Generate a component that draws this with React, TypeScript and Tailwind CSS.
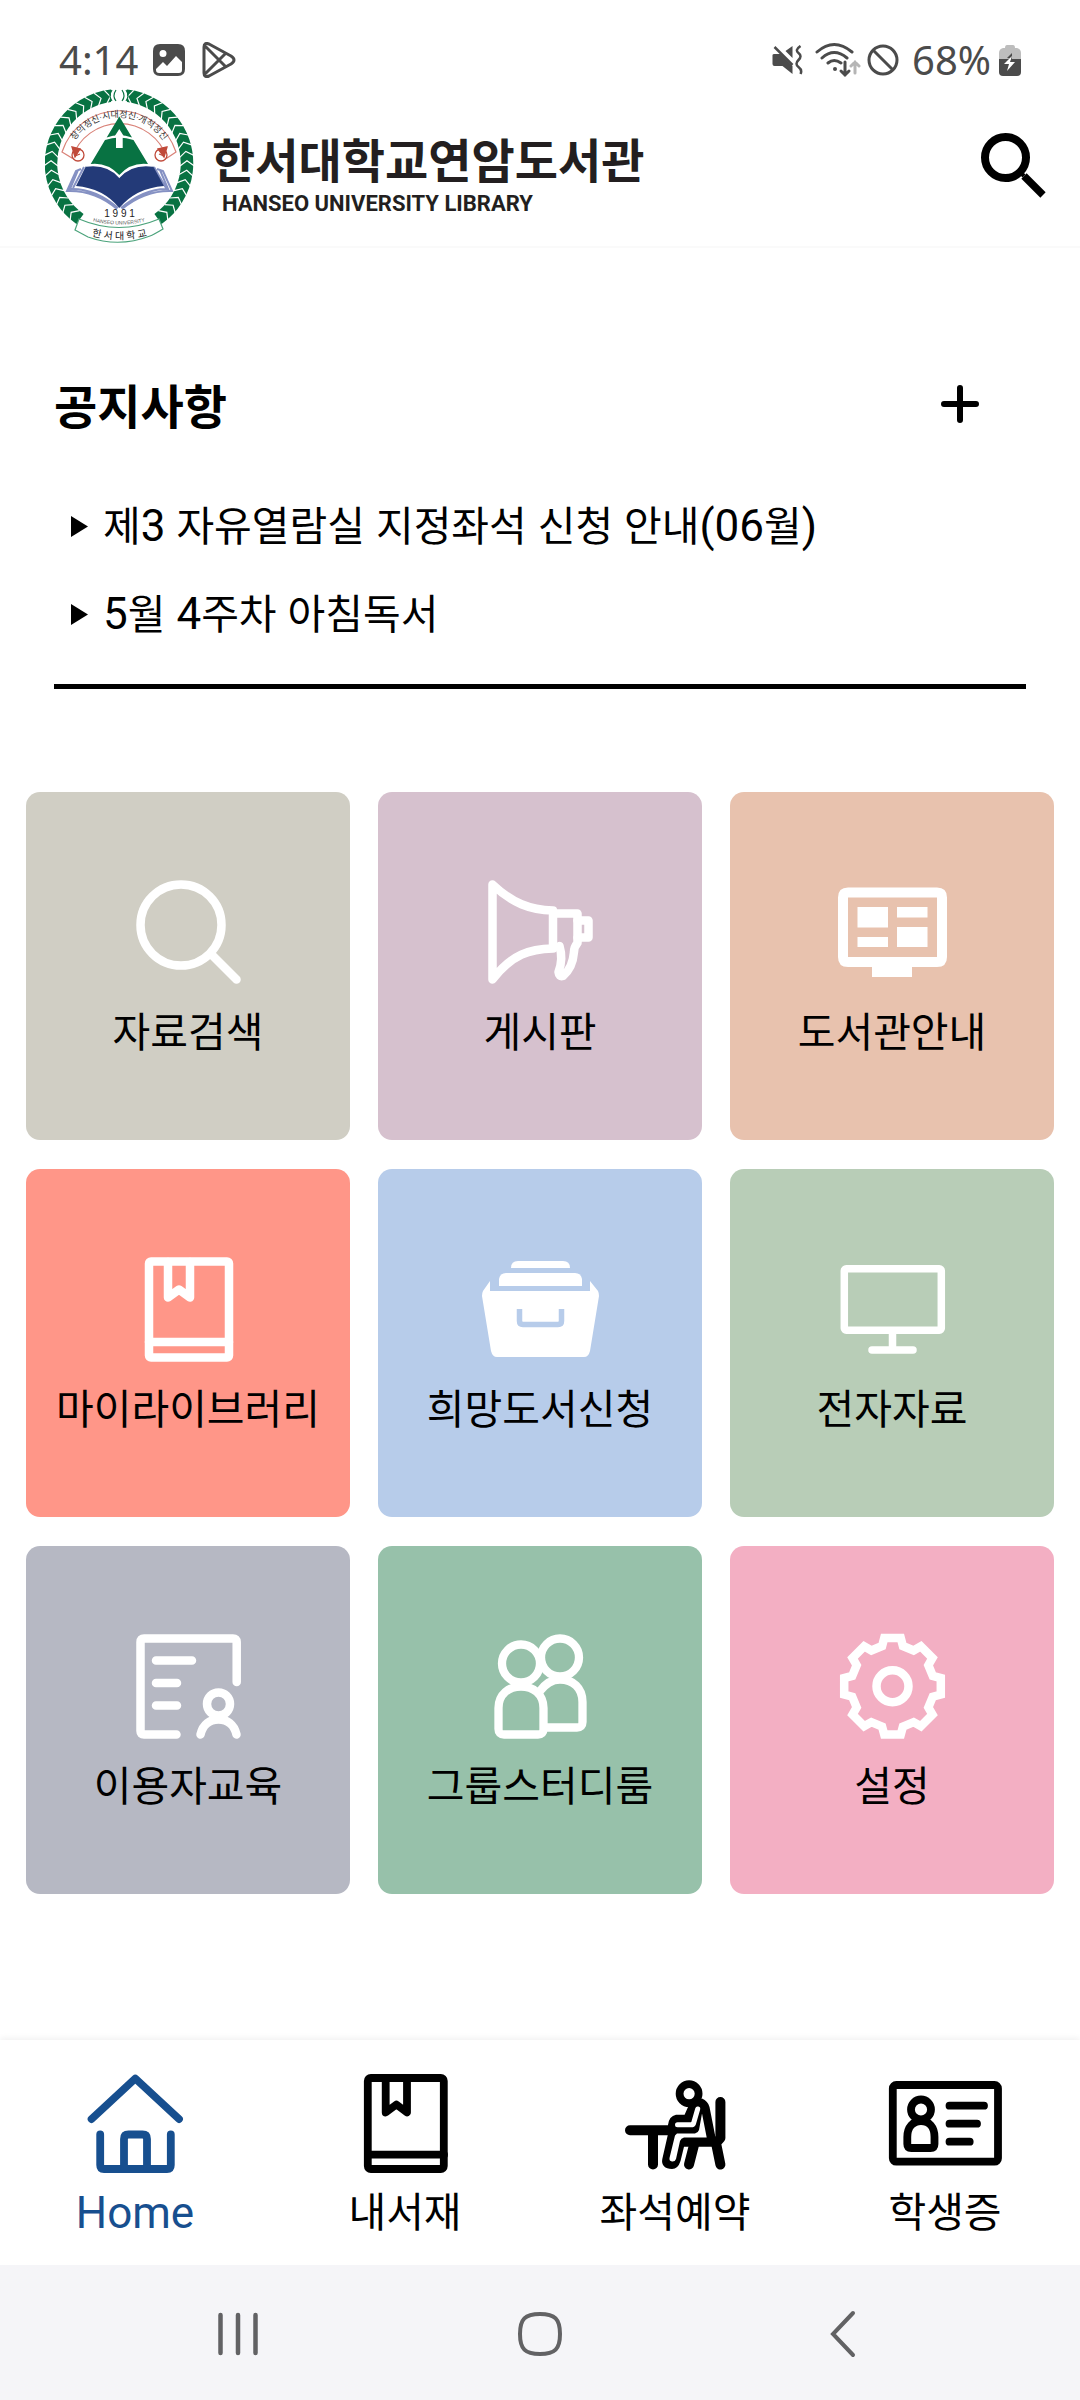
import type { ReactNode } from "react";

const korean = "font-['Roboto','Noto_Sans_CJK_KR',sans-serif]";

function TileIcon({ children }: { children: ReactNode }) {
  return (
    <svg
      aria-hidden="true"
      viewBox="0 0 120 120"
      className="size-[120px]"
      fill="none"
      stroke="currentColor"
      strokeWidth="8.5"
      strokeLinecap="round"
      strokeLinejoin="round"
    >
      {children}
    </svg>
  );
}

/* Latin letters and digits are set a little larger than the Hangul beside them. */
function MixedText({ text }: { text: string }) {
  return (
    <span>
      {text.split(/([\x20-\x7e]+)/).map((run, index) =>
        index % 2 === 1 ? (
          <span key={index} className="text-[44px]">
            {run}
          </span>
        ) : (
          run
        ),
      )}
    </span>
  );
}

function gearPath() {
  const points: string[] = [];
  for (let tooth = 0; tooth < 8; tooth++) {
    const corners: [number, number][] = [
      [-14.5, 41.6],
      [-9.7, 49],
      [9.7, 49],
      [14.5, 41.6],
    ];
    for (const [offset, radius] of corners) {
      const angle = ((tooth * 45 + offset) * Math.PI) / 180;
      points.push(`${(60.5 + radius * Math.sin(angle)).toFixed(2)} ${(60.3 - radius * Math.cos(angle)).toFixed(2)}`);
    }
  }
  return `M${points.join("L")}Z`;
}

const tiles: { label: string; color: string; icon: ReactNode }[] = [
  {
    label: "자료검색",
    color: "bg-[#d0cec4]",
    icon: (
      <>
        <circle cx="53" cy="53" r="40.5" />
        <path d="M83 82L108.5 107.5" />
      </>
    ),
  },
  {
    label: "게시판",
    color: "bg-[#d6c1ce]",
    icon: (
      <>
        <path d="M12.5 12.5V107.5C32 82 50 77 73 76.500V38.500C50 38 32 31 12.500 12.500Z" />
        <path d="M73 41.500H97.500V71Q94 75 94 80C93 92 89 99 83 104Q79 105 78.500 100C82 91 82.500 84 79.500 74" />
        <path d="M97.500 48.500H108.500V65.500H97.500" />
      </>
    ),
  },
  {
    label: "도서관안내",
    color: "bg-[#e8c2ae]",
    icon: (
      <g fill="currentColor" stroke="none">
        <path
          fillRule="evenodd"
          d="M16 15.500H105Q115 15.500 115 25.500V85Q115 95 105 95H80V105H40V95H16Q6 95 6 85V25.500Q6 15.500 16 15.500ZM16 25.500V85H105V25.500Z"
        />
        <path d="M25.500 35H56V55.500H25.500ZM25.500 65H56V75H25.500ZM65 35H95.500V45.500H65ZM65 55H95.500V75H65Z" />
      </g>
    ),
  },
  {
    label: "마이라이브러리",
    color: "bg-[#ff9688]",
    icon: (
      <>
        <rect x="21" y="12.500" width="80" height="96" rx="2" />
        <path d="M21 93H101M40 13V48.500L51 40.500L62 48.500V13" />
      </>
    ),
  },
  {
    label: "희망도서신청",
    color: "bg-[#b7ccea]",
    icon: (
      <g stroke="none" fill="currentColor">
        <path d="M31 19Q31 12 38 12H83Q90 12 90 19Z" />
        <path d="M19 37V30Q20 24 26 24H95Q101 24 102 30V37Z" />
        <path d="M10 32V42H110V32L118 42Q119 44 119 47L110 102Q108.500 108 104 108H17Q12.500 108 11 102L2 47Q2 44 3 42Z" />
        <path d="M39.500 60V72Q39.500 75.500 43 75.500H78Q81.500 75.500 81.500 72V60" fill="none" stroke="#b7ccea" strokeWidth="5.500" strokeLinecap="butt" />
      </g>
    ),
  },
  {
    label: "전자자료",
    color: "bg-[#b8cdb7]",
    icon: (
      <g strokeWidth="7.500">
        <rect x="12.300" y="19.800" width="97" height="61.500" rx="2" />
        <path d="M60.500 82V100M40 101H81" />
      </g>
    ),
  },
  {
    label: "이용자교육",
    color: "bg-[#b6b8c3]",
    icon: (
      <>
        <path d="M48.500 108.500H16Q12.500 108.500 12.500 105V16Q12.500 12.500 16 12.500H105Q108.700 12.500 108.700 16V56" />
        <path d="M28 34.500H64M28 57H49M28 79.500H49" />
        <circle cx="90.500" cy="78" r="11.500" />
        <path d="M72.500 108.500C75 98 82 93.500 90.500 93.500S106 98 108.500 108.500" />
      </>
    ),
  },
  {
    label: "그룹스터디룸",
    color: "bg-[#97c1aa]",
    icon: (
      <g strokeWidth="8.300">
        <circle cx="41" cy="37.500" r="19" />
        <circle cx="80" cy="31.500" r="19" />
        <path d="M18.500 103V82C18.500 68 29 60.500 41 60.500S63.500 68 63.500 82V103Q63.500 108.500 58 108.500H24Q18.500 108.500 18.500 103Z" />
        <path d="M60 65C66 57 72 53.500 80 53.500C93 53.500 102.500 62 102.500 76V96Q102.500 101.500 97 101.500H66" />
      </g>
    ),
  },
  {
    label: "설정",
    color: "bg-[#f3afc3]",
    icon: (
      <g strokeLinejoin="miter">
        <path d={gearPath()} />
        <circle cx="60.500" cy="60.300" r="16" />
      </g>
    ),
  },
];

const tabs: { label: string; style: string; icon: ReactNode }[] = [
  {
    label: "Home",
    style: "text-[#174f8f] text-[44px]",
    icon: (
      <g strokeWidth="7.800">
        <path d="M16.600 55L60.300 14.500L104 55" />
        <path d="M25.200 70.500V101Q25.200 105 29 105H92Q95.800 105 95.800 101V70.500" />
        <path d="M49 104V75Q49 70.500 53.500 70.500H67.500Q72 70.500 72 75V104" />
      </g>
    ),
  },
  {
    label: "내서재",
    style: "text-black text-[41px]",
    icon: (
      <g strokeWidth="7.800">
        <rect x="22.800" y="14" width="76" height="91" rx="3" />
        <path d="M23 90.700H99M40.700 14V48.500L51.400 40.500L62 48.500V14" />
      </g>
    ),
  },
  {
    label: "좌석예약",
    style: "text-black text-[41px]",
    icon: (
      <>
        <path d="M15 66.300H61M38 68V100.500M105.400 38V74L101 79L105.400 100.500M79 81L74 100.500" strokeWidth="10" />
        <path
          d="M73 43L87 34.500Q93 37 94.500 43L101 76V82.700H69L65.500 97Q63 105 57 105C50 105 46 101 47.300 95L53 70V61Q54 52 61 50.700H69.600Z"
          fill="currentColor"
          stroke="none"
        />
        <circle cx="74.100" cy="29.700" r="9.500" strokeWidth="7.800" fill="#fff" />
        <path d="M82.700 45L78.500 59.500Q78 60.800 76 60.800H62.500" stroke="#fff" strokeWidth="5" />
        <path
          d="M87 49.500L91.700 73.500H69Q66 74 65 77L61 95Q60 97.800 57 97.500Q54 97 54.500 94L60 71.500L62 69.500H80Q83 69 84 66Z"
          fill="#fff"
          stroke="none"
        />
      </>
    ),
  },
  {
    label: "학생증",
    style: "text-black text-[41px]",
    icon: (
      <g strokeWidth="7.800">
        <rect x="7.800" y="21" width="105.200" height="76.700" rx="3.500" />
        <circle cx="36" cy="45.500" r="10" />
        <path d="M22.300 80V73C22.300 63 28 57 36 57S49.500 63 49.500 73V80Q49.500 84 45.500 84H26.300Q22.300 84 22.300 80Z" />
        <path d="M64.500 41.700H99M64.500 59.700H92M64.500 77.700H84.700" />
      </g>
    ),
  },
];

function Emblem() {
  const angles: number[] = [];
  for (let a = 9; a <= 137; a += 8) angles.push(a, -a);
  return (
    <svg role="img" aria-label="한서대학교" viewBox="0 0 150 156" className="h-[156px] w-[150px]">
      <path d="M35 131A68 68 0 1 1 113 131" fill="none" stroke="#087242" strokeWidth="12.500" />
      <rect x="66" y="0" width="16" height="16" fill="#fff" />
      <g fill="none" stroke="#fff" strokeWidth="1.200">
        {angles.map((a) => (
          <path key={a} transform={`rotate(${a} 74 76)`} d={a > 0 ? "M77 1L72 8L77 15" : "M71 1L76 8L71 15"} />
        ))}
      </g>
      <path d="M67 2Q63 8 67 13M71 2Q67 8 71 13M77 2Q81 8 77 13M81 2Q85 8 81 13" fill="none" stroke="#087242" strokeWidth="1.200" />
      <path d="M17 64A60 60 0 0 1 131 64L122 70A50 50 0 0 0 27 70Z" fill="#fff" stroke="#d98278" strokeWidth="1.200" />
      <g fill="#fff" stroke="#c04a3a" strokeWidth="1.300">
        <circle cx="33" cy="67" r="6" />
        <circle cx="116" cy="67" r="6" />
        <path d="M27 59L35 61L30 69ZM122 59L113 61L119 69Z" fill="#c04a3a" />
        <path d="M30 68L35 66M114 66L119 68" />
      </g>
      <path id="motto" d="M24 63A54 54 0 0 1 124 63" fill="none" />
      <text fill="#333" fontSize="9" className={korean} textAnchor="middle">
        <textPath href="#motto" startOffset="50%">
          창의정신·시대정신·개척정신
        </textPath>
      </text>
      <path d="M74.300 28.500L87 49.500Q74 45 61.700 49.500Z" fill="#087242" />
      <path d="M60 52Q74 47 88.500 52L103 76Q86 74 74.300 87Q62 74 45.700 76Z" fill="#087242" />
      <path d="M74.300 41L79 48.500H77.700V60H71V48.500H69.500Z" fill="#fff" />
      <path d="M36 81L31 83L22 103Q50 102 72 121M33 82L25 101Q50 100 73 120M112 81L118 83L127 103Q100 102 77 121M115 82L123 101Q100 100 76 120M39 79L28 100M109 79L121 100" fill="none" stroke="#8591c3" strokeWidth="2" />
      <path d="M41 78Q62 75 74.300 89Q87 75 108 78L119 98Q91 100 74.300 120Q58 100 31 98Z" fill="#233a78" />
      <path d="M41 78Q62 75 74.300 89Q87 75 108 78" fill="none" stroke="#fff" strokeWidth="1.500" />
      <text x="74.500" y="129" textAnchor="middle" fontSize="10" fill="#222" className="font-['Liberation_Sans',sans-serif]">
        1 9 9 1
      </text>
      <path id="english" d="M43 132Q74 141 105 132" fill="none" />
      <text fill="#555" fontSize="5" className="font-['Liberation_Sans',sans-serif]" textAnchor="middle">
        <textPath href="#english" startOffset="50%">
          HANSEO UNIVERSITY
        </textPath>
      </text>
      <path d="M34 131Q74 148 114 131L118 141Q108 147 105 148Q74 160 43 149L30 142Z" fill="#fff" stroke="#4ba37b" strokeWidth="1.200" />
      <path id="ribbon" d="M34 144Q74 159 115 144" fill="none" />
      <text fill="#222" fontSize="10" className={korean} textAnchor="middle">
        <textPath href="#ribbon" startOffset="50%">
          한 서 대 학 교
        </textPath>
      </text>
    </svg>
  );
}

function StatusBar() {
  return (
    <div className="flex h-20 items-end justify-between pr-[59px] pl-[59px] font-['Noto_Sans',sans-serif] text-[40px] leading-10 text-[#4b4b4b]">
      <div className="flex items-center">
        <span className="mr-[15px]">4:14</span>
        <svg aria-hidden="true" viewBox="0 0 32 32" className="mr-[17px] size-8">
          <path
            fill="currentColor"
            fillRule="evenodd"
            d="M7 0H25Q32 0 32 7V25Q32 32 25 32H7Q0 32 0 25V7Q0 0 7 0ZM3 26Q3 29 6 29H26Q29 29 29 26V18L23 12L14 22L10 18L3 25ZM10 6A3.500 3.500 0 1 0 10 13A3.500 3.500 0 1 0 10 6Z"
          />
        </svg>
        <svg aria-hidden="true" viewBox="0 0 34 36" className="h-9 w-[34px]" fill="none" stroke="currentColor" strokeWidth="3" strokeLinejoin="round">
          <path d="M2 5Q2 0 7 2L29 14Q35 18 29 22L7 34Q2 36 2 31ZM3 4L24 25M3 32L24 11" />
        </svg>
      </div>
      <div className="flex items-center">
        <svg aria-hidden="true" viewBox="0 0 30 30" className="mr-3 h-[30px] w-[31px]" fill="none" stroke="currentColor">
          <path d="M0 10Q0 9 2 9H8L20 21V29L10 21H2Q0 21 0 19ZM13 6L20 1V13Z" fill="currentColor" stroke="none" />
          <path d="M2 2L20 20" strokeWidth="2.500" />
          <path d="M28 1Q22 5 26 8T26 15T26 22T28 29" strokeWidth="2.500" />
        </svg>
        <svg aria-hidden="true" viewBox="0 0 46 36" className="mr-[6px] h-9 w-[46px]" fill="none" stroke="currentColor" strokeWidth="3" strokeLinecap="round">
          <path d="M2 10Q19 -5 37 10M7 16Q19 5 32 16M13 21Q19 16 26 21" />
          <circle cx="20" cy="27" r="2" fill="currentColor" stroke="none" />
          <path d="M30 20V33M26 29L30 33L34 29" />
          <path d="M40 31V20M36 24L40 20L44 24" stroke="#b5b5b5" />
        </svg>
        <svg aria-hidden="true" viewBox="0 0 32 32" className="mr-[13px] size-8" fill="none" stroke="currentColor" strokeWidth="3">
          <circle cx="16" cy="16" r="14" />
          <path d="M6 6L26 26" />
        </svg>
        <span className="mr-2">68%</span>
        <svg aria-hidden="true" viewBox="0 0 22 32" className="h-8 w-[22px]">
          <path d="M6 4Q6 1 8 1H14Q16 1 16 4H18Q22 5 22 9V16H0V9Q0 5 4 4Z" fill="#bdbdbd" />
          <path d="M0 15H22V28Q22 32 18 32H4Q0 32 0 28Z" fill="currentColor" />
          <path d="M8 14L13 9V15Z" fill="currentColor" />
          <path d="M13 12L5 20H10L8 27L16 18H11Z" fill="#fff" />
        </svg>
      </div>
    </div>
  );
}

export default function App() {
  return (
    <div className={`flex min-h-screen flex-col bg-white text-black ${korean}`}>
      <StatusBar />
      <header className="flex items-start justify-between border-b-2 border-[#fafafa] pt-2 pr-[34px] pb-[2px] pl-[45px]">
        <a href="#home" className="flex items-start">
          <Emblem />
          <span className="mt-11 ml-[17px] flex flex-col text-[#231f20]">
            <span className="text-[47px] leading-[60px] font-bold">한서대학교연암도서관</span>
            <span className="ml-[10px] text-[22px] leading-6 font-bold">HANSEO UNIVERSITY LIBRARY</span>
          </span>
        </a>
        <button type="button" aria-label="검색" className="mt-11">
          <svg aria-hidden="true" viewBox="0 0 66 66" className="size-[66px]" fill="none" stroke="currentColor">
            <circle cx="25.500" cy="25.500" r="20.500" strokeWidth="8" />
            <path d="M40 40L44 44" strokeWidth="4" />
            <path d="M44 44L63 63" strokeWidth="7.500" />
          </svg>
        </button>
      </header>

      <main className="flex-1">
        <section aria-labelledby="notice-title" className="mx-[54px] border-b-5 border-black pt-[130px] pb-[26px]">
          <div className="flex items-center justify-between pr-[47px]">
            <h2 id="notice-title" className="text-[47px] leading-[60px] font-bold">
              공지사항
            </h2>
            <button type="button" aria-label="공지사항 더보기">
              <svg aria-hidden="true" viewBox="0 0 38 38" className="mb-2 size-[38px]" stroke="currentColor" strokeWidth="6" strokeLinecap="round">
                <path d="M19 3V35M3 19H35" />
              </svg>
            </button>
          </div>
          <ul className="mt-11">
            {["제3 자유열람실 지정좌석 신청 안내(06월)", "5월 4주차 아침독서"].map((notice) => (
              <li key={notice}>
                <a href="#notice" className="flex h-[88px] items-center pl-[17px] text-[41px] leading-[60px]">
                  <svg aria-hidden="true" viewBox="0 0 17 21" className="mr-[15px] h-[21px] w-[17px]">
                    <path d="M0 0L17 10.500L0 21Z" fill="currentColor" />
                  </svg>
                  <MixedText text={notice} />
                </a>
              </li>
            ))}
          </ul>
        </section>

        <div className="mt-[103px] grid grid-cols-3 gap-x-7 gap-y-[29px] px-[26px]">
          {tiles.map((tile) => (
            <a key={tile.label} href="#menu" className={`flex h-[348px] flex-col items-center rounded-[14px] pt-20 ${tile.color}`}>
              <span className="text-white">
                <TileIcon>{tile.icon}</TileIcon>
              </span>
              <span className="mt-[11px] text-[41px] leading-[60px] whitespace-nowrap">{tile.label}</span>
            </a>
          ))}
        </div>
      </main>

      <nav aria-label="하단 메뉴" className="grid h-[225px] grid-cols-4 bg-white pt-6 shadow-[0_-2px_6px_rgba(0,0,0,0.06)]">
        {tabs.map((tab) => (
          <a key={tab.label} href="#tab" className={`flex flex-col items-center leading-[58px] ${tab.style}`}>
            <TileIcon>{tab.icon}</TileIcon>
            <span>{tab.label}</span>
          </a>
        ))}
      </nav>

      <div className="grid h-[135px] grid-cols-3 items-center justify-items-center bg-[#f5f5f8] px-[87px] pt-[3px] text-[#626264]">
        <button type="button" aria-label="최근 앱">
          <svg aria-hidden="true" viewBox="0 0 48 48" className="size-12" stroke="currentColor" strokeWidth="4.500" strokeLinecap="round">
            <path d="M6.500 5V43M24 5V43M41.500 5V43" />
          </svg>
        </button>
        <button type="button" aria-label="홈">
          <svg aria-hidden="true" viewBox="0 0 48 48" className="size-12" fill="none" stroke="currentColor" strokeWidth="4">
            <path d="M24 4C39 4 44 9 44 24S39 44 24 44S4 39 4 24S9 4 24 4Z" />
          </svg>
        </button>
        <button type="button" aria-label="뒤로">
          <svg aria-hidden="true" viewBox="0 0 48 48" className="size-12" fill="none" stroke="currentColor" strokeWidth="4" strokeLinecap="round">
            <path d="M35 3L15 24L35 45" />
          </svg>
        </button>
      </div>
    </div>
  );
}
